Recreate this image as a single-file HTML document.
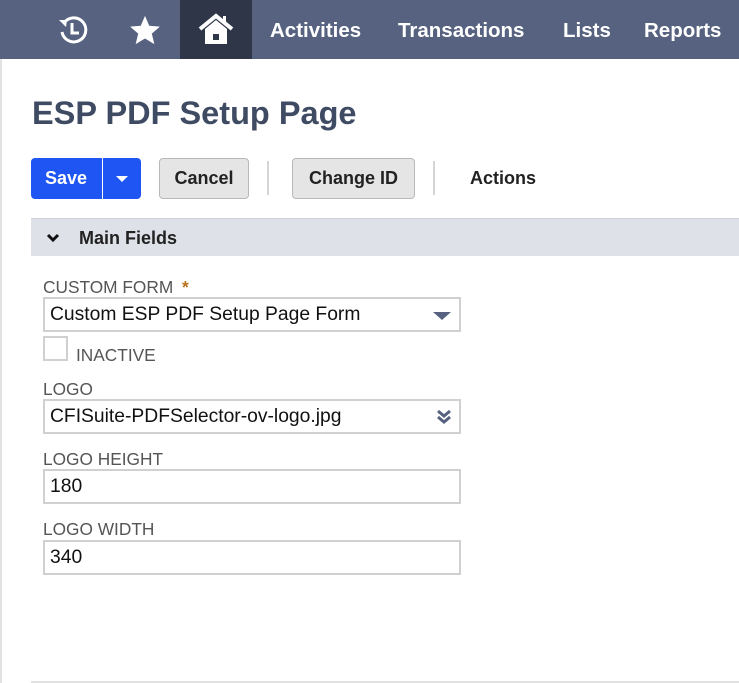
<!DOCTYPE html>
<html><head><style>
*{margin:0;padding:0;box-sizing:border-box}
body{width:739px;height:683px;overflow:hidden;background:#fff;font-family:"Liberation Sans",Arial,sans-serif;position:relative}
.nav{position:absolute;left:0;top:0;width:739px;height:59px;background:#56627f}
.home{position:absolute;left:180px;top:0;width:72px;height:59px;background:#2f3648}
.nt{position:absolute;top:18px;color:#fff;font-size:20.5px;font-weight:bold;line-height:24px}
.lb{position:absolute;left:0;top:59px;width:2px;height:624px;background:#e2e2e2}
h1{position:absolute;left:32px;top:95px;font-size:32.5px;color:#3f4b63;font-weight:bold}
.btn{position:absolute;top:158px;height:41px;border-radius:4px;font-size:18px;font-weight:bold;line-height:41px;text-align:center}
.gray{background:#e5e5e5;border:1px solid #b8b8b8;color:#222;line-height:39px}
.sep{position:absolute;top:161px;width:2px;height:34px;background:#d5d5d5}
.sec{position:absolute;left:31px;top:218px;width:708px;height:38px;background:#dfe1e8;border-top:1px solid #cfd3dc}
.lab{position:absolute;left:43px;font-size:17.3px;color:#555}
.inp{position:absolute;left:43px;width:418px;height:35px;border:2px solid #d0d0d0;font-size:19.3px;color:#111;padding-left:5px;line-height:31px}
</style></head><body>
<div class="nav"></div>
<div class="home"></div>
<svg style="position:absolute;left:56px;top:13px" width="34" height="34" viewBox="0 0 34 34"><path d="M8 10 A12 12 0 1 1 6 19" fill="none" stroke="#fff" stroke-width="3"/><path d="M3 7 L11 7 L10 14 Z" fill="#fff"/><path d="M16 10 V20 H23" fill="none" stroke="#fff" stroke-width="3"/></svg>
<svg style="position:absolute;left:128px;top:13px" width="34" height="34" viewBox="0 0 24 24"><path d="M12 2l3 7 7.5.6-5.7 5 1.8 7.4L12 18l-6.6 4 1.8-7.4-5.7-5L9 9z" fill="#fff"/></svg>
<svg style="position:absolute;left:198px;top:13px" width="36" height="32" viewBox="0 0 36 32"><path d="M2 16 L18 3 L34 16" fill="none" stroke="#fff" stroke-width="4"/><path d="M7 16 L18 7 L29 16 V31 H7 Z" fill="#fff"/><rect x="15" y="21" width="6" height="6" fill="#2f3648"/><rect x="25" y="3" width="3" height="8" fill="#fff"/></svg>
<div class="nt" style="left:270px;top:19px">Activities</div>
<div class="nt" style="left:398px;top:19px">Transactions</div>
<div class="nt" style="left:563px;top:19px">Lists</div>
<div class="nt" style="left:644px;top:19px">Reports</div>
<div class="lb"></div>
<h1>ESP PDF Setup Page</h1>
<div class="btn" style="left:31px;width:110px;background:#1f55f3;color:#fff;text-align:left;padding-left:14px">Save<div style="position:absolute;left:71px;top:0;width:1px;height:41px;background:#fff"></div><div style="position:absolute;left:85px;top:18px;border:6px solid transparent;border-top:6px solid #fff;border-bottom:0"></div></div>
<div class="btn gray" style="left:159px;width:90px">Cancel</div>
<div class="sep" style="left:267px"></div>
<div class="btn gray" style="left:292px;width:123px">Change ID</div>
<div class="sep" style="left:433px"></div>
<div class="btn" style="left:470px;color:#222">Actions</div>
<div class="sec"><svg style="position:absolute;left:15px;top:14px" width="14" height="10" viewBox="0 0 14 10"><path d="M2 2l5 5 5-5" fill="none" stroke="#111" stroke-width="3"/></svg><div style="position:absolute;left:48px;top:9px;font-size:18px;font-weight:bold;color:#222">Main Fields</div></div>
<div class="lab" style="top:277px">CUSTOM FORM <span style="color:#b8741a;font-weight:bold;margin-left:4px">*</span></div>
<div class="inp" style="top:297px">Custom ESP PDF Setup Page Form<div style="position:absolute;right:8px;top:13px;border:9px solid transparent;border-top:8px solid #56627f;border-bottom:0"></div></div>
<div style="position:absolute;left:43px;top:336px;width:25px;height:25px;border:2px solid #d0d0d0"></div>
<div class="lab" style="left:76px;top:345px">INACTIVE</div>
<div class="lab" style="top:379px">LOGO</div>
<div class="inp" style="top:399px">CFISuite-PDFSelector-ov-logo.jpg<svg style="position:absolute;right:6px;top:8px" width="18" height="16" viewBox="0 0 18 16"><path d="M3 2l6 5 6-5M3 8l6 5 6-5" fill="none" stroke="#56627f" stroke-width="3"/></svg></div>
<div class="lab" style="top:449px">LOGO HEIGHT</div>
<div class="inp" style="top:469px">180</div>
<div class="lab" style="top:519px">LOGO WIDTH</div>
<div class="inp" style="top:540px">340</div>
<div style="position:absolute;left:31px;top:681px;width:708px;height:2px;background:#e2e2e2"></div>
</body></html>
